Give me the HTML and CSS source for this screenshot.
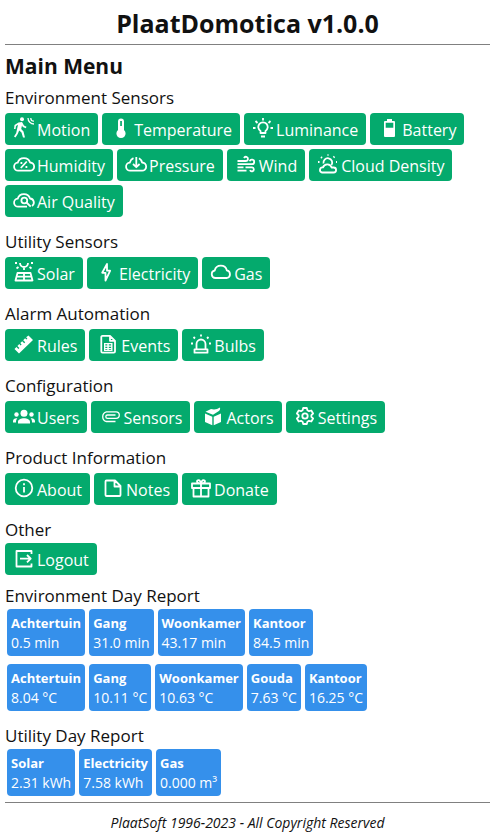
FILE: index.html
```html
<!DOCTYPE html>
<html lang="en">
<head>
<meta charset="utf-8">
<meta name="viewport" content="width=device-width, initial-scale=1">
<title>PlaatDomotica</title>
<link rel="stylesheet" href="styles.css">
</head>
<body>
<header class="site-header"><h1>PlaatDomotica v1.0.0</h1></header>
<main>
<h2>Main Menu</h2>
<section class="group">
<h3>Environment Sensors</h3>
<nav class="menu">
<a class="btn" href="#motion"><svg class="icon solid" viewBox="0 1 24 24"><circle cx="10" cy="3.200" r="2"/><path d="M6.500 6.500 10 6l2 3.500 2.500 1.200-.7 1.500-3-1.300-.8-1.300-.8 3.500 2.300 2.400 1.500 6h-2l-1.500-5-2.300-2-1.500 3.600L3.500 21.500l-1.500-1 2.200-3.500L6 8.800 4 10l-.5 3H2l.5-4z"/><path class="line thin" d="M22 8a6 6 0 0 1-6-6M22 5.200A3.200 3.200 0 0 1 18.800 2"/></svg>Motion</a>
<a class="btn" href="#temperature"><svg class="icon solid" viewBox="-1 0 24 24"><path fill-rule="evenodd" d="M8 4.500a3 3 0 0 1 6 0v8.500a4.600 4.600 0 1 1-6 0zM10.200 4v5h1.700V4z"/></svg>Temperature</a>
<a class="btn" href="#luminance"><svg class="icon" viewBox="0 0 24 24"><path d="M9.500 16v-2a4.700 4.700 0 1 1 5 0v2zM10 19.500h4M12 1v2.500M2 11h2.500M19.500 11h2.500M4.500 4l2 2M19.500 4l-2 2"/></svg>Luminance</a>
<a class="btn" href="#battery"><svg class="icon solid" viewBox="-1 0 24 24"><path fill-rule="evenodd" d="M9 2h5v2h2a1 1 0 0 1 1 1v14a1 1 0 0 1-1 1H7a1 1 0 0 1-1-1V5a1 1 0 0 1 1-1h2zM7.700 5.700v5h7.600v-5z"/></svg>Battery</a>
<a class="btn" href="#humidity"><svg class="icon" viewBox="0 0 24 24"><path d="M6.500 17.700a4 4 0 0 1-.8-8 6.500 6.500 0 0 1 12.400-.2 4.100 4.100 0 0 1-.1 8.200zM8.800 15l6-6.500M8.500 10h1.800M13.500 14h1.800"/></svg>Humidity</a>
<a class="btn" href="#pressure"><svg class="icon" viewBox="0 0 24 24"><path d="M9.500 5.200a6.500 6.500 0 0 0-3.800 4.500 4 4 0 0 0 .8 8H18a4.100 4.100 0 0 0 .1-8.200A7 7 0 0 0 15 5.200M12.300 4v10M9 11l3.300 3.200 3.300-3.200"/></svg>Pressure</a>
<a class="btn" href="#wind"><svg class="icon" viewBox="0 0 24 24"><path d="M3.500 8h8.500a2.100 2.100 0 1 0-2-3M3.500 11.200H18a2.300 2.300 0 1 0-2.300-3M3.500 14.400h6M11.500 14.400h6.500a2 2 0 1 1-2 2.800M3.500 17.600h9"/></svg>Wind</a>
<a class="btn" href="#clouds"><svg class="icon" viewBox="0 0 24 24"><path d="M6 19.500a2.600 2.600 0 0 1 1-5.100 4.500 4.500 0 0 1 8.600.1h2a2.500 2.500 0 0 1 0 5zM7.500 10.500a4.400 4.400 0 1 1 8 1.500M2 9h1.500M5 4l1 1M12 1.500v1M18.500 3.500l-1 1M20 9h1"/></svg>Cloud Density</a>
<a class="btn" href="#air"><svg class="icon" viewBox="0 0 24 24"><path d="M15 17.700H6.500a4 4 0 0 1-.8-8 6.500 6.500 0 0 1 12.400-.2 4.100 4.100 0 0 1 1.900 7.500"/><circle cx="12.300" cy="11.500" r="2.900"/><path d="M14.500 13.500l4.200 4.200"/></svg>Air Quality</a>
</nav>
</section>
<section class="group">
<h3>Utility Sensors</h3>
<nav class="menu">
<a class="btn" href="#solar"><svg class="icon" viewBox="0 0 24 24"><path d="M5.500 12h13l2 7.500h-17zM4.500 15.700h15M12 12v7.500M3 2h2M19 2h2M4.500 7.500l2-1.500M19.500 7.500l-2-1.500M8 2a4 4 0 0 0 8 0M12 6.500V9"/></svg>Solar</a>
<a class="btn" href="#electricity"><svg class="icon" viewBox="0 0 24 24"><path d="M13 3 8.200 11.800h3.300v7.700L16.200 9.700h-3.200z"/></svg>Electricity</a>
<a class="btn" href="#gas"><svg class="icon" viewBox="0 0 24 24"><path d="M6.500 17a3.800 3.800 0 0 1-.8-7.500 6.300 6.300 0 0 1 12.200-.1 3.900 3.900 0 0 1 .1 7.600z"/></svg>Gas</a>
</nav>
</section>
<section class="group">
<h3>Alarm Automation</h3>
<nav class="menu">
<a class="btn" href="#rules"><svg class="icon solid" viewBox="0 0 24 24"><path d="M2.500 15.900 4.400 14l2 2 1-1-2-2 1.900-1.900 1.300 1.300 1-1L8.300 10.100l1.900-1.900 2 2 1-1-2-2 1.900-1.900 1.300 1.300 1-1L14.100 4.300 16.500 2.500l4.500 4.500L7 20.500z"/></svg>Rules</a>
<a class="btn" href="#events"><svg class="icon" viewBox="0 0 24 24"><path d="M6.500 2.800h7.500l5 5v10.700a1.200 1.200 0 0 1-1.200 1.200H6.500a1.200 1.200 0 0 1-1.200-1.200V4a1.200 1.200 0 0 1 1.200-1.200zM14 2.800v5h5"/><path class="solid-part" fill-rule="evenodd" d="M8 10h8.500v8H8zM9.300 11.300v1.200h2v-1.200zM12.800 11.300v1.200h2.300v-1.200zM9.300 13.800V15h2v-1.200zM12.800 13.800V15h2.300v-1.200zM9.300 16.200v.8h2v-.8zM12.800 16.200v.8h2.300v-.8z"/></svg>Events</a>
<a class="btn" href="#bulbs"><svg class="icon" viewBox="0 0 24 24"><path d="M7.500 16v-5a4.500 4.500 0 0 1 9 0v5M5.500 16.300h13v3.400h-13zM12 1.500v2M2 10.500h2M20 10.500h2M4.500 4l1.500 1.500M19.500 4 18 5.500"/></svg>Bulbs</a>
</nav>
</section>
<section class="group">
<h3>Configuration</h3>
<nav class="menu">
<a class="btn" href="#users"><svg class="icon solid" viewBox="0 0 24 24"><circle cx="12" cy="8.200" r="3.500"/><circle cx="4.500" cy="9.500" r="2.200"/><circle cx="19.500" cy="9.500" r="2.200"/><path d="M6 18.500V17c0-5 12-5 12 0v1.500zM1 17.500V16c0-1.800 1.800-3 4.300-2.700-1 1.200-1.300 2.200-1.300 4.200zM23 17.500V16c0-1.800-1.800-3-4.300-2.700 1 1.200 1.300 2.200 1.300 4.200z"/></svg>Users</a>
<a class="btn" href="#sensors"><svg class="icon" viewBox="0 0 24 24"><path class="thin" d="M17.500 16.500H8.500a5 5 0 0 1 0-9.700H18a3.300 3.300 0 0 1 0 6.600H9.500a1.700 1.700 0 0 1 0-3.400h8"/></svg>Sensors</a>
<a class="btn" href="#actors"><svg class="icon solid" viewBox="0 0 24 24"><path d="M4 8.500l7.300 3.200v8.500L4 17zM12.700 11.700 20 8.500V17l-7.300 3.200zM4.500 6.800 10 4c3 1 6 .5 9-1.500.3 1.500 0 3-1.500 3.800L12 9.800z"/></svg>Actors</a>
<a class="btn" href="#settings"><svg class="icon" viewBox="0 1 24 24"><path d="M10.200 4h3.600l.6 2.300 1.600.9 2.300-.7 1.800 3-1.700 1.600v1.800l1.700 1.600-1.800 3-2.300-.7-1.600.9-.6 2.300h-3.600l-.6-2.300-1.600-.9-2.300.7-1.800-3 1.700-1.600v-1.800l-1.700-1.600 1.800-3 2.300.7 1.600-.9z"/><circle cx="12" cy="12" r="2.700"/></svg>Settings</a>
</nav>
</section>
<section class="group">
<h3>Product Information</h3>
<nav class="menu">
<a class="btn" href="#about"><svg class="icon" viewBox="0 1 24 24"><circle cx="12" cy="12" r="8.300"/><path d="M12 11v5.500M12 7.200v2"/></svg>About</a>
<a class="btn" href="#notes"><svg class="icon" viewBox="0 1 24 24"><path d="M5.500 4.500h8.500l5.500 5.500v9a1 1 0 0 1-1 1h-13a1 1 0 0 1-1-1V5.500a1 1 0 0 1 1-1zM13.500 4.500v6h6"/></svg>Notes</a>
<a class="btn" href="#donate"><svg class="icon" viewBox="0 0 24 24"><path d="M3 6.500h18V11H3zM4.500 11v8.500h15V11M12 6.500v13M12 6.500C9 6.500 8 5.500 8 4.300S11 1.500 12 6.500c1-5 4-3.400 4-2.200s-1 2.200-4 2.200z"/></svg>Donate</a>
</nav>
</section>
<section class="group last">
<h3>Other</h3>
<nav class="menu">
<a class="btn" href="#logout"><svg class="icon" viewBox="0 0 24 24"><path d="M19.500 7V4h-15v15.500h15v-3M8 11.700h11M15 8l3.700 3.700-3.700 3.700"/></svg>Logout</a>
</nav>
</section>
<section class="report">
<h3>Environment Day Report</h3>
<dl class="cards">
<div class="card"><dt>Achtertuin</dt><dd>0.5 min</dd></div>
<div class="card"><dt>Gang</dt><dd>31.0 min</dd></div>
<div class="card"><dt>Woonkamer</dt><dd>43.17 min</dd></div>
<div class="card"><dt>Kantoor</dt><dd>84.5 min</dd></div>
</dl>
<dl class="cards">
<div class="card"><dt>Achtertuin</dt><dd>8.04 °C</dd></div>
<div class="card"><dt>Gang</dt><dd>10.11 °C</dd></div>
<div class="card"><dt>Woonkamer</dt><dd>10.63 °C</dd></div>
<div class="card"><dt>Gouda</dt><dd>7.63 °C</dd></div>
<div class="card"><dt>Kantoor</dt><dd>16.25 °C</dd></div>
</dl>
</section>
<section class="report">
<h3>Utility Day Report</h3>
<dl class="cards">
<div class="card"><dt>Solar</dt><dd>2.31 kWh</dd></div>
<div class="card"><dt>Electricity</dt><dd>7.58 kWh</dd></div>
<div class="card"><dt>Gas</dt><dd>0.000 m³</dd></div>
</dl>
</section>
</main>
<footer class="site-footer">PlaatSoft 1996-2023 - All Copyright Reserved</footer>
</body>
</html>
```

FILE: styles.css
```css
* {
  box-sizing: border-box;
}

body {
  margin: 0;
  padding: 4px 3px 0 5px;
  background: #fff;
  color: #111;
  font-family: "Segoe UI", "Open Sans", "Noto Sans", sans-serif;
  font-size: 16px;
}

h1, h2, h3, dl, dd {
  margin: 0;
}

.site-header {
  padding-bottom: 2px;
  border-bottom: 1px solid gray;
  text-align: center;
}

h1 {
  font-size: 25px;
  line-height: 38px;
}

h2 {
  padding: 4px 0;
  font-size: 21px;
  line-height: 34px;
}

h3 {
  padding-bottom: 4px;
  font-size: 17px;
  font-weight: 400;
  line-height: 22px;
}

.group {
  margin-bottom: 14px;
}

.group.last {
  margin-bottom: 8px;
}

.group.last h3 {
  padding-bottom: 2px;
}

.menu {
  display: flex;
  flex-wrap: wrap;
  gap: 4px;
}

.btn {
  display: flex;
  align-items: center;
  height: 32px;
  padding: 2px 8px 0 7px;
  border-radius: 4px;
  background: #04aa6d;
  color: #fff;
  text-decoration: none;
  white-space: nowrap;
}

.icon {
  width: 24px;
  height: 24px;
  margin: 0 1px 2px 0;
  fill: none;
  stroke: #fff;
  stroke-width: 1.800;
  stroke-linejoin: round;
}

.icon.solid {
  fill: #fff;
  stroke: none;
}

.icon .solid-part {
  fill: #fff;
  stroke: none;
}

.icon .line {
  fill: none;
  stroke: #fff;
}

.icon .thin {
  stroke-width: 1.300;
}

.cards {
  display: flex;
  flex-wrap: wrap;
  gap: 4px;
  padding: 0 2px;
}

.cards + .cards {
  margin-top: 8px;
}

.report {
  margin-bottom: 12px;
}

.report:last-child {
  margin-bottom: 6px;
}

.report h3 {
  padding-bottom: 0;
  line-height: 26px;
}

.card {
  padding: 4px 4px 3px;
  border-radius: 4px;
  background: #3590eb;
  color: #fff;
  font-size: 14px;
  line-height: 20px;
}

.card dt {
  font-size: 13px;
  font-weight: 700;
}

.site-footer {
  padding-top: 8px;
  border-top: 1px solid gray;
  font-size: 14px;
  font-style: italic;
  line-height: 24px;
  text-align: center;
}
```
